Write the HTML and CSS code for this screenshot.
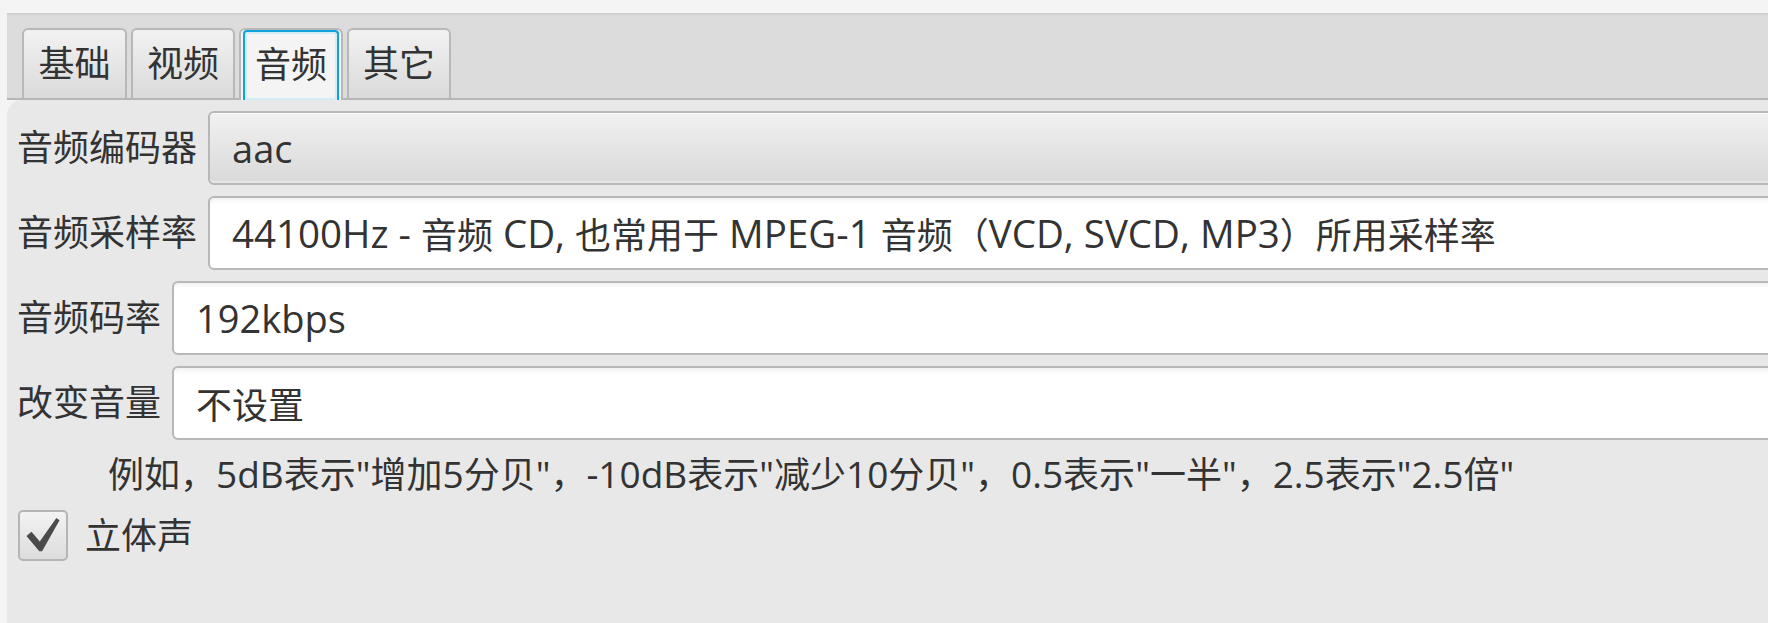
FILE: index.html
```html
<!DOCTYPE html>
<html lang="zh-CN">
<head>
<meta charset="utf-8">
<title>音频设置</title>
<link rel="stylesheet" href="styles.css">
</head>
<body>
<div class="tabpane">
  <div class="tab-header">
    <div class="tab">基础</div>
    <div class="tab">视频</div>
    <div class="tab selected"><span class="focus">音频</span></div>
    <div class="tab">其它</div>
  </div>
  <div class="content">
    <div class="row">
      <label class="label">音频编码器</label>
      <div class="field combo"><span class="lat">aac</span></div>
    </div>
    <div class="row">
      <label class="label">音频采样率</label>
      <div class="field"><span class="lat wide">44100Hz - </span>音频<span class="lat wide"> CD, </span>也常用于<span class="lat wide"> MPEG-1 </span>音频（<span class="lat wide">VCD, SVCD, MP3</span>）所用采样率</div>
    </div>
    <div class="row">
      <label class="label">音频码率</label>
      <div class="field"><span class="lat">192kbps</span></div>
    </div>
    <div class="row">
      <label class="label">改变音量</label>
      <div class="field">不设置</div>
    </div>
    <div class="hint">例如，<span class="lat">5dB</span>表示<span class="lat">"</span>增加<span class="lat">5</span>分贝<span class="lat">"</span>，<span class="lat">-10dB</span>表示<span class="lat">"</span>减少<span class="lat">10</span>分贝<span class="lat">"</span>，<span class="lat">0.5</span>表示<span class="lat">"</span>一半<span class="lat">"</span>，<span class="lat">2.5</span>表示<span class="lat">"2.5</span>倍<span class="lat">"</span></div>
    <div class="check-row">
      <span class="checkbox">
        <svg viewBox="0 0 50 50" width="46" height="46"><path d="M7 25 L12.5 20.5 L21.5 31 L39.5 5.5 L43 8 L24 41.5 L21 41.5 Z" fill="#4b4b4b"/></svg>
      </span>
      <span class="check-label">立体声</span>
    </div>
  </div>
</div>
</body>
</html>
```

FILE: styles.css
```css
html, body {
  margin: 0;
  padding: 0;
  height: 100%;
}
body {
  background: #f4f4f4;
  overflow: hidden;
  font-family: "Open Sans", "Noto Sans CJK SC", sans-serif;
  color: #333333;
  font-size: 36px;
}
.lat {
  font-size: 38px;
}
.lat.wide {
  font-size: 38.5px;
}
.hint .lat {
  font-size: 37px;
}
.tabpane {
  margin-top: 13px;
  margin-left: 7px;
  display: flex;
  flex-direction: column;
  height: calc(100% - 13px);
}
.tab-header {
  height: 85px;
  background: #dcdcdc;
  border-bottom: 2px solid #b6b6b6;
  box-shadow: inset 0 3px 3px -2px rgba(0,0,0,0.10);
  display: flex;
  align-items: flex-end;
  padding-left: 15px;
  gap: 4px;
  position: relative;
}
.tab {
  box-sizing: border-box;
  width: 105px;
  height: 70px;
  border: 2px solid #b8b8b8;
  border-bottom: none;
  border-radius: 6px 6px 0 0;
  background: linear-gradient(#f2f2f2, #dadada);
  display: flex;
  align-items: center;
  justify-content: center;
  line-height: 1;
}
.tab + .tab {
  width: 104px;
}
.tab.selected {
  height: 72px;
  margin-bottom: -2px;
  background: #f4f4f4;
  padding: 0 2px;
  align-items: stretch;
  position: relative;
}
.focus {
  flex: 1;
  display: flex;
  align-items: center;
  justify-content: center;
  border: 2px solid #10a2dc;
  border-bottom: none;
  border-radius: 4px 4px 0 0;
  box-shadow: inset 0 0 0 2px #d4ecf6;
  padding-bottom: 2px;
}
.content {
  flex: 1;
  background: #e8e8e8;
  border-top-left-radius: 15px;
  padding: 11px 0 0 10px;
  display: flex;
  flex-direction: column;
  gap: 11px;
}
.row {
  display: flex;
  align-items: center;
  gap: 11px;
}
.label {
  white-space: nowrap;
  line-height: 1;
}
.field {
  flex: 1;
  box-sizing: border-box;
  height: 74px;
  margin-right: -40px;
  border: 2px solid #b8b8b8;
  border-radius: 6px;
  background: #ffffff;
  box-shadow: inset 0 5px 5px -3px rgba(0,0,0,0.07);
  display: flex;
  align-items: center;
  padding-left: 22px;
  white-space: pre;
  overflow: hidden;
}
.combo {
  background: linear-gradient(#f1f1f1, #d9d9d9);
  box-shadow: inset 0 1px 0 #fafafa, inset 0 -2px 0 #e6e6e6;
}
.hint {
  padding-left: 91px;
  line-height: 48px;
  margin-top: -1px;
  white-space: nowrap;
}
.check-row {
  display: flex;
  align-items: center;
  gap: 17px;
  margin-top: 0;
}
.checkbox {
  box-sizing: border-box;
  width: 50px;
  height: 51px;
  margin-left: 1px;
  border: 2px solid #b5b5b5;
  border-radius: 5px;
  background: linear-gradient(#f3f3f3, #dcdcdc);
  display: flex;
  align-items: center;
  justify-content: center;
}
.check-label {
  line-height: 1;
}
```
